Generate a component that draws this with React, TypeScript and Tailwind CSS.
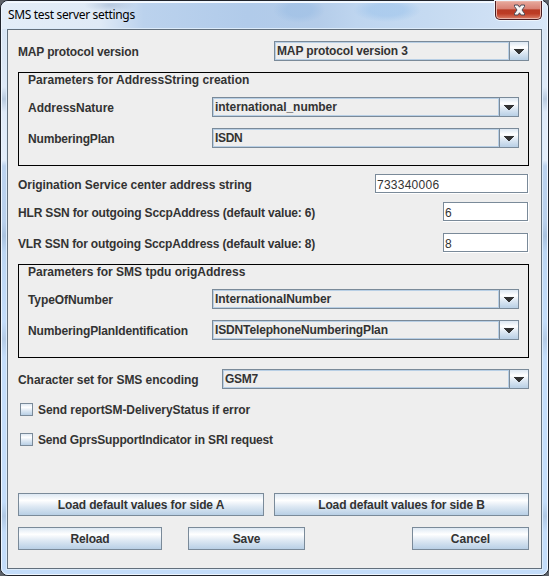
import React from "react";

const steel = "bg-[linear-gradient(to_bottom,#dde8f3_0%,#ffffff_30%,#dde8f3_60%,#b8cfe5_100%)]";

function Label({ text, className = "" }: { text: string; className?: string }) {
  return <span className={`block whitespace-pre leading-[14px] ${className}`}>{text}</span>;
}

function Combo({ value, className, textClass }: { value: string; className: string; textClass: string }) {
  return (
    <div className={`flex h-5 shrink-0 border border-[#7a8a99] ${className}`}>
      <div className="flex flex-1 border border-[#b8cfe5] pl-px pt-px">
        <Label text={value} className={textClass} />
      </div>
      <div className={`flex w-[19px] items-center justify-center border-l border-[#7a8a99] pt-px ${steel}`}>
        <svg width="10" height="5" viewBox="0 0 10 5" shapeRendering="crispEdges" fill="#333333">
          <path d="M0 0H10V1H9V2H8V3H7V4H6V5H4V4H3V3H2V2H1V1H0Z" />
        </svg>
      </div>
    </div>
  );
}

function Row({ label, className, children }: { label: React.ReactNode; className: string; children: React.ReactNode }) {
  return (
    <div className={`flex h-5 items-start justify-between ${className}`}>
      <div className="pt-1">{label}</div>
      {children}
    </div>
  );
}

function Field({ value, className }: { value: string; className: string }) {
  return (
    <div className={`h-5 shrink-0 border-b border-r border-white ${className}`}>
      <div className="h-[19px] border border-[#7a8a99] bg-white pl-px pt-[3px] font-normal">
        <Label text={value} className="tracking-[0.25px]" />
      </div>
    </div>
  );
}

function Check({ text, className, textClass }: { text: string; className: string; textClass: string }) {
  return (
    <div className={`flex h-[13px] items-center pl-0.5 ${className}`}>
      <div className={`mr-[5px] size-[13px] border border-[#7a8a99] ${steel}`} />
      <Label text={text} className={textClass} />
    </div>
  );
}

function Button({ text, className, textClass = "" }: { text: string; className: string; textClass?: string }) {
  return (
    <button className={`flex h-[23px] items-center justify-center border border-[#7a8a99] ${steel} ${className}`}>
      <Label text={text} className={textClass} />
    </button>
  );
}

export default function App() {
  return (
    <div className="h-[576px] w-[549px] overflow-hidden bg-[#5d6269]">
      <div className="h-[576px] w-[549px] rounded-[8px] border border-[#20242c] bg-[#bcd4ef]">
        <div className="flex h-[574px] flex-col rounded-[7px] border border-[#eef6ff] bg-[linear-gradient(to_bottom,#d5e3f3_0px,#dbe7f5_60px,#dfeaf7_85px,#b9cbe0_97px,#dfeaf8_110px,#e4eefa_158px,#bcd3ef_164px,#b9d0ec_220px,#a9c2df_234px,#bcd6f3_250px,#c4ddfa_320px,#b4cbe6_337px,#c4ddfa_355px,#c4ddfa_500px,#b0c8e4_514px,#c4ddfa_530px,#c4ddfa_100%)]">
          <div className="flex h-[27px] shrink-0 items-start justify-between rounded-t-[6px] bg-[radial-gradient(ellipse_26px_7px_at_108px_3px,#a9bdd6b0,transparent),radial-gradient(ellipse_26px_13px_at_297px_8px,#9dbfe5a0_50%,transparent),radial-gradient(ellipse_34px_12px_at_385px_8px,#9dc4ec90_50%,transparent),linear-gradient(to_right,#e3edf8_0%,#dfeaf6_18%,#bbd2ed_26%,#b1cbea_45%,#b4cce9_58%,#bed5ef_65%,#c5daf1_78%,#d0e1f5_92%,#d9e8f8_100%)] pl-[6px] pr-[5px] shadow-[inset_0_1px_0_#f5faff]">
            <span className="whitespace-pre pt-[5px] font-['Noto_Sans',sans-serif] text-[12px] leading-4 tracking-[-0.33px] text-black">SMS test server settings</span>
            <div className="-mt-px flex h-[19px] w-[47px] items-center justify-center rounded-b-[5px] border border-t-0 border-[#4a1d22] bg-[linear-gradient(to_bottom,#e7aa9e_0%,#d98275_42%,#b83a24_50%,#bd3c25_70%,#dc8069_100%)] pl-[2px] shadow-[0_0_0_1px_#eef5fc,inset_0_0_0_1px_#eab5aa]">
              <svg width="13" height="12" viewBox="0 0 13 12">
                <path d="M1.5 1H5L6.5 3.2L8 1H11.5V2.5L9 6L11.5 9.5V11H8L6.5 8.8L5 11H1.5V9.5L4 6L1.5 2.5Z" fill="#f5f5f5" stroke="#4d4b57" strokeWidth="1" strokeLinejoin="round" />
              </svg>
            </div>
          </div>
          <main className="ml-[5px] h-[540px] w-[535px] border border-[#626f7c] bg-[#eeeeee] pl-[10px] pr-[12px] pt-[11px] font-['Liberation_Sans',Arial,sans-serif] text-[12px] font-bold text-[#333333] shadow-[0_0_0_1px_#dcebfa]">
            <Row className="" label={<Label text="MAP protocol version" className="tracking-[-0.16px]" />}>
              <Combo className="w-[255px]" value="MAP protocol version 3" textClass="tracking-[-0.14px]" />
            </Row>
            <section className="mt-[11px] h-[94px] border border-black pl-[9px] pr-[9px]">
              <Label text="Parameters for AddressString creation" className="tracking-[0.03px]" />
              <Row className="mt-[10px]" label={<Label text="AddressNature" />}>
                <Combo className="w-[307px]" value="international_number" textClass="tracking-[-0.04px]" />
              </Row>
              <Row className="mt-[11px]" label={<Label text="NumberingPlan" className="tracking-[-0.17px]" />}>
                <Combo className="w-[307px]" value="ISDN" textClass="tracking-[-0.3px]" />
              </Row>
            </section>
            <Row className="mt-[8px]" label={<Label text="Origination Service center address string" className="tracking-[-0.04px]" />}>
              <Field className="w-[154px]" value="733340006" />
            </Row>
            <Row className="mt-[8px]" label={<Label text="HLR SSN for outgoing SccpAddress (default value: 6)" className="tracking-[-0.16px]" />}>
              <Field className="w-[86px]" value="6" />
            </Row>
            <Row className="mt-[11px]" label={<Label text="VLR SSN for outgoing SccpAddress (default value: 8)" className="tracking-[-0.15px]" />}>
              <Field className="w-[86px]" value="8" />
            </Row>
            <section className="mt-[11px] h-[94px] border border-black pl-[9px] pr-[9px]">
              <Label text="Parameters for SMS tpdu origAddress" />
              <Row className="mt-[10px]" label={<Label text="TypeOfNumber" className="tracking-[-0.08px]" />}>
                <Combo className="w-[307px]" value="InternationalNumber" textClass="tracking-[-0.06px]" />
              </Row>
              <Row className="mt-[11px]" label={<Label text="NumberingPlanIdentification" className="tracking-[-0.13px]" />}>
                <Combo className="w-[307px]" value="ISDNTelephoneNumberingPlan" textClass="tracking-[-0.14px]" />
              </Row>
            </section>
            <Row className="mt-[11px]" label={<Label text="Character set for SMS encoding" className="tracking-[-0.05px]" />}>
              <Combo className="w-[307px]" value="GSM7" textClass="tracking-[-0.3px]" />
            </Row>
            <Check className="mt-[14px]" text="Send reportSM-DeliveryStatus if error" textClass="tracking-[-0.07px]" />
            <Check className="mt-[17px]" text="Send GprsSupportIndicator in SRI request" textClass="tracking-[-0.16px]" />
            <div className="mt-[47px] flex gap-[10px]">
              <Button className="w-[246px]" text="Load default values for side A" textClass="tracking-[-0.13px]" />
              <Button className="w-[255px]" text="Load default values for side B" textClass="tracking-[-0.14px]" />
            </div>
            <div className="mt-[11px] flex">
              <Button className="w-[144px]" text="Reload" textClass="tracking-[-0.2px]" />
              <Button className="ml-[26px] w-[117px]" text="Save" textClass="tracking-[-0.1px]" />
              <Button className="ml-auto w-[117px]" text="Cancel" />
            </div>
          </main>
        </div>
      </div>
    </div>
  );
}
